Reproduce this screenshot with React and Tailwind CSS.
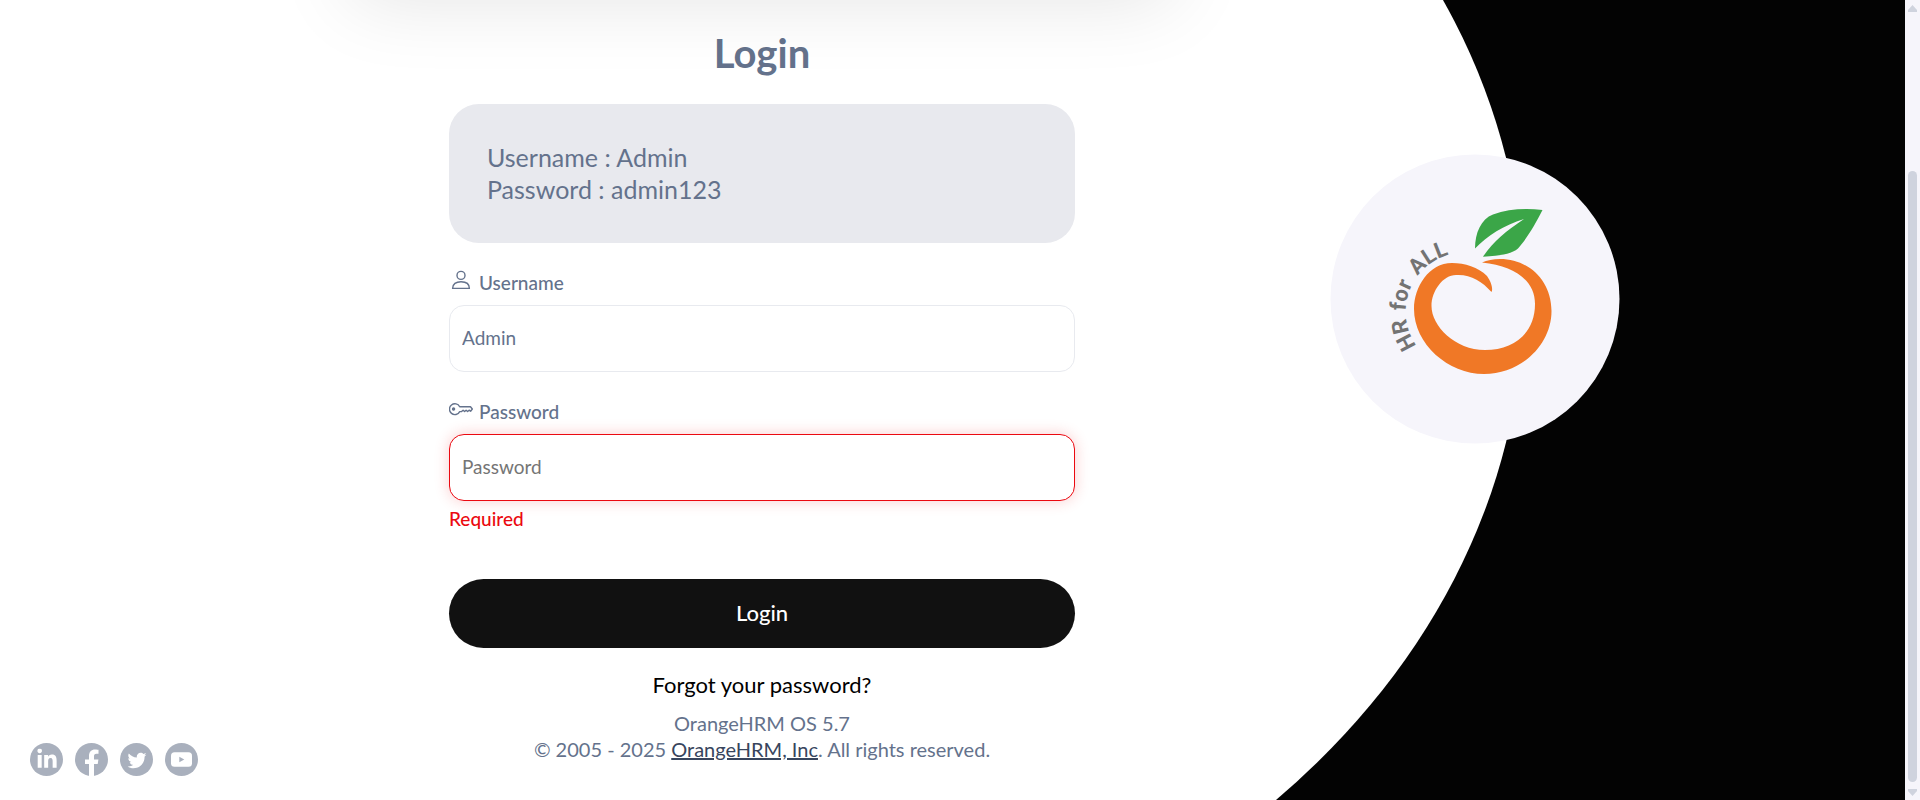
import React from "react";
import { FaLinkedinIn, FaTwitter } from "react-icons/fa";

const SocialLink = ({ label, children }) => (
  <a href="#" aria-label={label} className="block">
    <svg viewBox="0 0 33 33" className="size-[33px]" aria-hidden="true">
      <circle cx="16.5" cy="16.5" r="16.5" fill="#a9b0bd" />
      {children}
    </svg>
  </a>
);

const SocialLinks = () => (
  <nav aria-label="Social media" className="flex items-center gap-3 self-end pb-6 pl-[30px]">
    <SocialLink label="LinkedIn">
      <FaLinkedinIn x="6" y="5.5" size={22} color="#fff" />
    </SocialLink>
    <SocialLink label="Facebook">
      <path
        fill="#fff"
        d="M14 33V21h-4v-4.500h4v-3.700c0-4 2.400-6.300 6-6.300 1.700 0 3.500.3 3.500.3v4h-2c-2 0-2.500 1.200-2.500 2.500v3.200h4.400l-.7 4.500H19V33z"
      />
    </SocialLink>
    <SocialLink label="Twitter">
      <FaTwitter x="7.5" y="8" size={19} color="#fff" />
    </SocialLink>
    <SocialLink label="YouTube">
      <rect x="6" y="9.300" width="21" height="14.500" rx="3.500" fill="#fff" />
      <path d="M14.300 13.700v5.600l5-2.800z" fill="#a9b0bd" />
    </SocialLink>
  </nav>
);

const UserIcon = () => (
  <svg viewBox="0 0 24 24" className="-mt-1.5 size-6" fill="none" stroke="currentColor" strokeWidth="1.4" aria-hidden="true">
    <circle cx="12" cy="7.400" r="4" />
    <path d="M3.600 20.400C3.600 16 7 13.700 12 13.700s8.400 2.300 8.400 6.700z" strokeLinejoin="round" />
  </svg>
);

const KeyIcon = () => (
  <svg viewBox="0 0 24 24" className="-mt-1.5 size-6" fill="none" stroke="currentColor" strokeWidth="1.4" strokeLinejoin="round" aria-hidden="true">
    <path d="M10.700 9.800H21.500L23.300 12l-1.700 2.200-1.500-1-1.500 1.400-1.500-1.400-1.500 1.400-1.500-1.400-1.500 1.400h-1.900A5.400 5.400 0 1 1 10.700 9.800z" />
    <circle cx="4.600" cy="12" r="1" fill="currentColor" />
  </svg>
);

const Logo = () => (
  <svg viewBox="10 10 290 290" className="w-full" role="img" aria-label="HR for ALL">
    <circle cx="155" cy="155" r="144.500" fill="#f6f5fb" />
    <path id="logo-arc" fill="none" d="M96.500 201.500 A59 59 0 0 1 129.500 110.500" />
    <text fill="#737373" fontFamily="'Liberation Sans Narrow', Roboto, sans-serif" fontWeight="700" fontSize="22">
      <textPath href="#logo-arc">HR</textPath>
      <textPath href="#logo-arc" startOffset="37">for</textPath>
      <textPath href="#logo-arc" startOffset="74">ALL</textPath>
    </text>
    <path
      fill="#3ba648"
      d="M155 104.500C155 89 161 75 173 70.500C188 65 205 64 222.500 66C216 79 206 96 198 104.500C191 110.500 179 111.500 163 112.700C173 98 186 87 204 75C184 81 167 92 155 104.500Z"
    />
    <path
      fill="#f07826"
      fillRule="evenodd"
      d="M171.500 148C173 146 172 139 167 132C158 123 145 119 132 119C109 119 94 143 94 165C94 200 128 230 164 230C202 230 231.500 200 231.500 167C231.500 137 209 115 180 115C173 115 167 116.500 162 118.500C194 122 215 136 215 160C215 189 194 206 165 206C135 206 111.500 182 111.500 162C111.500 147 123 131 136 131C150 130 162 137 171.500 148Z"
    />
  </svg>
);

const Field = ({ id, label, icon, children }) => (
  <div className="mt-6">
    <label htmlFor={id} className="flex h-8 items-center gap-1.5 text-[19px] font-medium">
      {icon}
      {label}
    </label>
    <div className="mt-1.5">{children}</div>
  </div>
);

const LoginForm = () => (
  <main className="pt-[33px] pb-[38px]">
    <h1 className="text-center text-[40px] leading-10 font-bold">Login</h1>
    <div className="mt-[31px] rounded-[30px] bg-[#e8e9ee] px-[38px] pt-[37px] pb-[38px] text-[25px] leading-8">
      <p>Username : Admin</p>
      <p>Password : admin123</p>
    </div>
    <form onSubmit={(e) => e.preventDefault()}>
      <Field id="username" label="Username" icon={<UserIcon />}>
        <input
          id="username"
          type="text"
          defaultValue="Admin"
          className="block h-[67px] w-full rounded-[15px] border border-[#e8eaef] bg-white px-3 pb-0.5 text-[19px] outline-none"
        />
      </Field>
      <Field id="password" label="Password" icon={<KeyIcon />}>
        <input
          id="password"
          type="password"
          placeholder="Password"
          aria-invalid="true"
          aria-describedby="password-error"
          className="block h-[67px] w-full rounded-[15px] border border-[#eb0910] bg-white px-3 pb-0.5 text-[19px] shadow-[0_0_15px_rgba(235,9,16,0.2)] outline-none placeholder:text-[#757575]"
        />
      </Field>
      <p id="password-error" className="mt-1 text-[19px] leading-7 font-medium text-[#eb0910]">
        Required
      </p>
      <button type="submit" className="mt-[46px] block h-[69px] w-full rounded-full bg-[#111111] pb-0.5 text-[22px] font-medium text-white">
        Login
      </button>
    </form>
    <p className="mt-[21px] text-center text-[22px] leading-8 text-black">
      <a href="#">Forgot your password?</a>
    </p>
    <footer className="mt-[9px] text-center text-[20px] leading-[26px]">
      <p>OrangeHRM OS 5.7</p>
      <p>
        © 2005 - 2025{" "}
        <a href="#" className="text-[#38455d] underline">
          OrangeHRM, Inc
        </a>
        . All rights reserved.
      </p>
    </footer>
  </main>
);

const ScrollRail = () => (
  <div aria-hidden="true" className="relative flex w-[15px] shrink-0 flex-col items-center bg-[#f6f5fb] pt-[5px] pb-1">
    <svg viewBox="0 0 9 7" className="h-[7px] w-[9px]" fill="#cfd3de">
      <path d="M4.500 0 9 5v2H0V5z" />
    </svg>
    <div className="mt-[159px] mb-[7px] w-[9px] flex-1 rounded-full bg-[#cfd3de]" />
    <svg viewBox="0 0 9 7" className="h-[7px] w-[9px]" fill="#cfd3de">
      <path d="M4.500 7 9 2V0H0v2z" />
    </svg>
  </div>
);

export default function App() {
  return (
    <div className="relative flex min-h-screen overflow-hidden bg-[#030303] font-[Lato,'Open_Sans',sans-serif] text-[#64728c]">
      <div className="absolute inset-0 bg-white [clip-path:ellipse(47.35%_729px_at_32%_300px)]" />
      <div className="relative flex min-w-0 flex-1">
        <div className="relative grid w-4/5 grid-cols-[1fr_626px_1fr]">
          <div className="absolute bottom-full left-1/2 h-40 w-[820px] -translate-x-1/2 shadow-[0_0_80px_rgba(0,0,0,0.11)]" />
          <SocialLinks />
          <LoginForm />
        </div>
        <div className="-ml-[194px] w-[290px] shrink-0 pt-[154px]">
          <Logo />
        </div>
      </div>
      <ScrollRail />
    </div>
  );
}
